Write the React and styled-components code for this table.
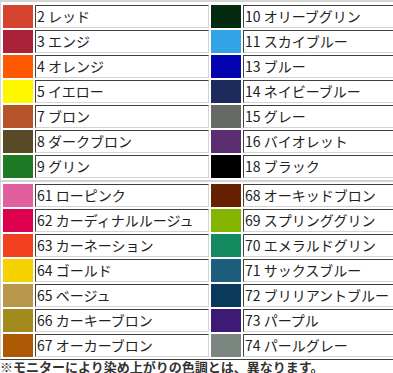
import React from 'react';
import styled, { createGlobalStyle } from 'styled-components';

const GlobalStyle = createGlobalStyle`
  html, body {
    margin: 0;
    padding: 0;
    background: #ffffff;
    overflow: hidden;
  }
  body {
    font-family: "Noto Sans CJK JP", "Noto Sans", sans-serif;
  }
`;

const Page = styled.div`
  width: 393px;
  height: 373px;
  overflow: hidden;
  display: flex;
  flex-direction: column;
  align-items: flex-start;
`;

const Chart = styled.div`
  display: grid;
  grid-template-columns: 30px 174px 30px 174px;
  grid-auto-rows: 23px;
  gap: 2px;
  padding: ${(p) => (p.$first ? '3px' : '2px')} 2px 2px 2px;
  border-style: solid;
  border-width: ${(p) => (p.$first ? '2px' : '1px')} 1px 1px 1px;
  border-color: #d4d4d4 #404040 ${(p) => (p.$first ? '#d4d4d4' : '#404040')} #d4d4d4;
  flex-shrink: 0;
`;

const Swatch = styled.div`
  background: ${(p) => p.$color};
`;

const Label = styled.div`
  box-sizing: border-box;
  border: 1px solid;
  border-color: #404040 #d4d4d4 #d4d4d4 #404040;
  font-size: 14px;
  line-height: 21px;
  padding-left: 1px;
  color: #222222;
  white-space: nowrap;
`;

const Note = styled.p`
  margin: 0;
  font-size: 13px;
  line-height: 12px;
  padding-top: 1px;
  font-weight: bold;
  color: #333333;
  white-space: nowrap;
`;

const tableA = [
  [['#d5442e', '2 レッド'], ['#032a0e', '10 オリーブグリン']],
  [['#aa2238', '3 エンジ'], ['#31a3e6', '11 スカイブルー']],
  [['#fe5800', '4 オレンジ'], ['#0303b0', '13 ブルー']],
  [['#fff700', '5 イエロー'], ['#1c2b5c', '14 ネイビーブルー']],
  [['#b55428', '7 ブロン'], ['#656b64', '15 グレー']],
  [['#584a26', '8 ダークブロン'], ['#5b2d6e', '16 バイオレット']],
  [['#1e7b25', '9 グリン'], ['#000000', '18 ブラック']],
];

const tableB = [
  [['#e0609e', '61 ローピンク'], ['#662200', '68 オーキッドブロン']],
  [['#dd004d', '62 カーディナルルージュ'], ['#84b400', '69 スプリンググリン']],
  [['#f3401f', '63 カーネーション'], ['#138a5f', '70 エメラルドグリン']],
  [['#f6d100', '64 ゴールド'], ['#1d5e7c', '71 サックスブルー']],
  [['#b8964a', '65 ベージュ'], ['#0a3a5b', '72 ブリリアントブルー']],
  [['#a38a1f', '66 カーキーブロン'], ['#3d1a74', '73 パープル']],
  [['#ad5a04', '67 オーカーブロン'], ['#7b8680', '74 パールグレー']],
];

function ColorChart({ rows, first }) {
  return (
    <Chart $first={first}>
      {rows.flatMap((row, i) =>
        row.flatMap(([color, name], j) => [
          <Swatch key={`s${i}-${j}`} $color={color} />,
          <Label key={`l${i}-${j}`}>{name}</Label>,
        ])
      )}
    </Chart>
  );
}

export default function App() {
  return (
    <Page>
      <GlobalStyle />
      <ColorChart rows={tableA} first />
      <ColorChart rows={tableB} />
      <Note>※モニターにより染め上がりの色調とは、異なります。</Note>
    </Page>
  );
}
